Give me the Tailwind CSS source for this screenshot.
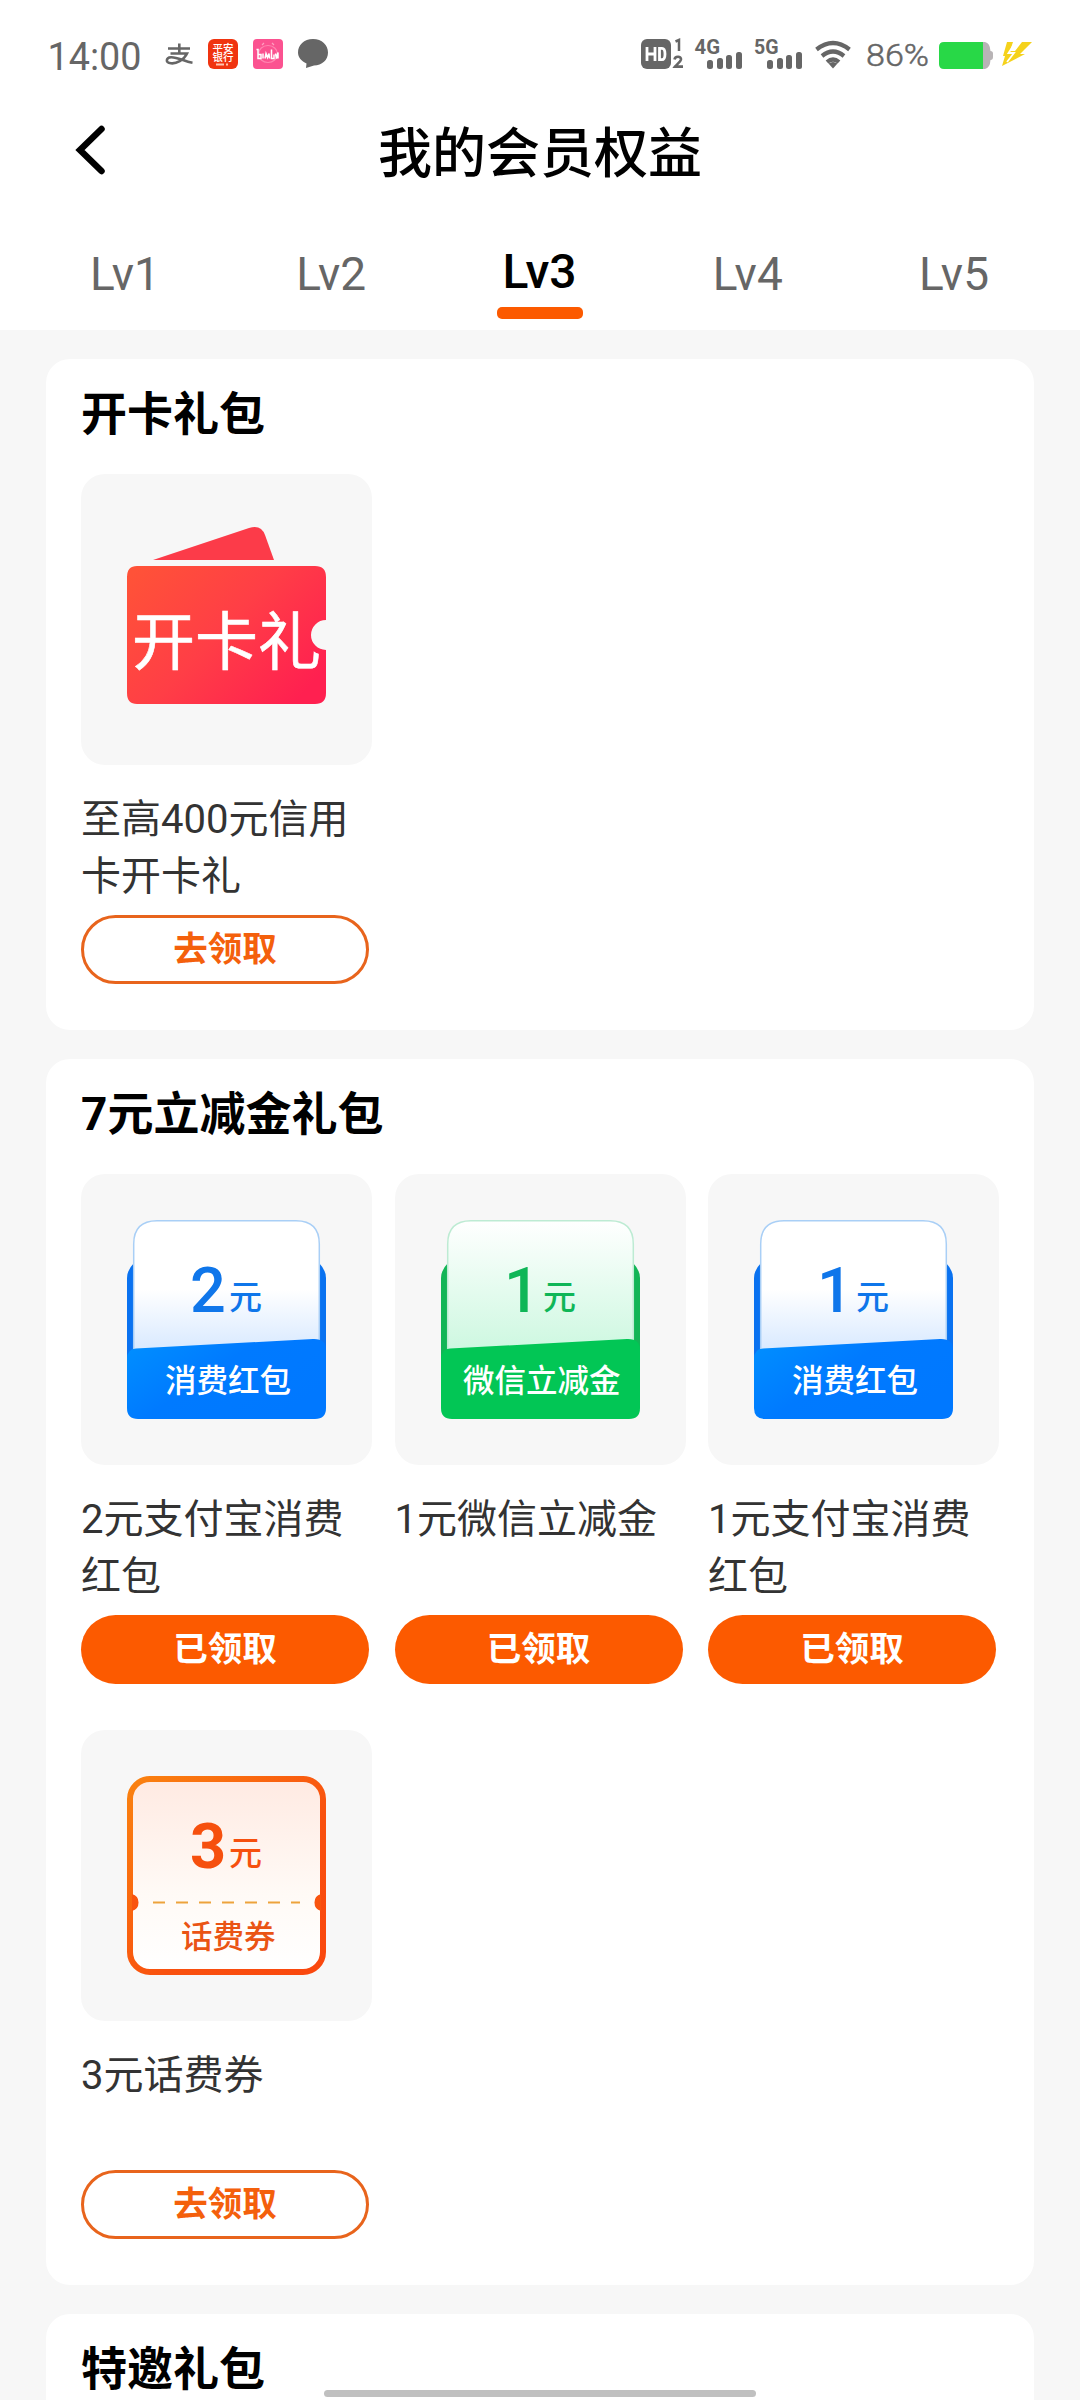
<!DOCTYPE html>
<html lang="zh-CN">
<head>
<meta charset="utf-8">
<title>我的会员权益</title>
<script src="https://cdn.jsdelivr.net/npm/@tailwindcss/browser@4"></script>
</head>
<body class="w-[1080px] h-[2400px] overflow-hidden relative bg-[#f7f7f7] font-[Roboto,'Noto_Sans_CJK_SC',sans-serif] text-black">

<svg class="absolute w-0 h-0">
  <defs>
    <linearGradient id="red" x1="0" y1="0.1" x2="1" y2="0.75"><stop offset="0" stop-color="#ff5238"/><stop offset=".5" stop-color="#ff3e46"/><stop offset="1" stop-color="#ff2050"/></linearGradient>
    <linearGradient id="bluePaper" x1="0" y1="0" x2="0" y2="1"><stop offset="0" stop-color="#fff"/><stop offset=".48" stop-color="#fff"/><stop offset="1" stop-color="#cfe4ff"/></linearGradient>
    <linearGradient id="greenPaper" x1="0" y1="0" x2="0" y2="1"><stop offset="0" stop-color="#fff"/><stop offset="1" stop-color="#c8f7dd"/></linearGradient>
    <linearGradient id="blueFront" x1="0" y1="0" x2="1" y2="0.6"><stop offset="0" stop-color="#0090ff"/><stop offset=".5" stop-color="#007aff"/><stop offset="1" stop-color="#0078ff"/></linearGradient>
    <linearGradient id="orangeEdge" x1="0" y1="0" x2="1" y2="1"><stop offset="0" stop-color="#fa8210"/><stop offset=".6" stop-color="#f9510f"/><stop offset="1" stop-color="#fa470e"/></linearGradient>
    <linearGradient id="orangePaper" x1="0" y1="0" x2="0" y2="1"><stop offset="0" stop-color="#ffeae2"/><stop offset=".6" stop-color="#fffaf6"/><stop offset="1" stop-color="#fff"/></linearGradient>
    <path id="envBack" d="M46 185V104Q46 96 53 89H238Q245 96 245 104V185Z"/>
    <path id="envPaper" d="M52.700 190V70Q52.700 46.700 76 46.700H215Q238.300 46.700 238.300 70V190Z"/>
    <path id="envFront" d="M46 185Q46 175 55 174.500L232 165Q245 164.500 245 176V234Q245 245 234 245H57Q46 245 46 234Z"/>
  </defs>
</svg>

<header class="h-[330px] bg-white">
  <div class="h-[108px] flex justify-between pl-[40px]">
    <svg class="w-[300px] h-[108px]" viewBox="40 0 300 108">
      <text x="47.500" y="69.500" font-size="38" fill="#666" textLength="94" lengthAdjust="spacingAndGlyphs">14:00</text>
      <g fill="none" stroke="#666" stroke-width="2.600"><path d="M168 48.500H190M179.300 43.500V53M170.500 53.500H187C184 60 176 64 171 63.300C165 62.500 166 57.500 171 57.200C178 57 184 61.500 192.500 62.800"/></g>
      <rect x="208" y="39" width="30" height="30" rx="6" fill="#f03410"/>
      <g fill="#fff" font-weight="500" font-size="10.500"><text x="212.500" y="51.500">平安</text><text x="212.500" y="61">银行</text></g>
      <path d="M216 64.500h8M226 64.500h2" stroke="#ffc4b0" stroke-width="2"/>
      <rect x="253" y="39" width="30" height="30" rx="4" fill="#fb5290"/>
      <ellipse cx="268" cy="54" rx="9.500" ry="8.500" fill="none" stroke="#ff85b0" stroke-width="1.200"/>
      <path d="M262 45l2-2M274 45l-2-2" stroke="#ffa0c0" stroke-width="1.200"/>
      <path d="M256.500 49.500h1.500v9h3v-4h-3M263 53.500v5M265 58.500l1-5 1.500 4 1.500-4 .5 5M271.500 49.500v9h2.500v-4M275.500 53.500l1 5 1.500-6v6" fill="none" stroke="#fff" stroke-width="1.500"/>
      <path d="M313 39C322 39 328 45 328 52.500S322 65.500 314 65.500L306 68 306.500 63.500C301.500 61 298 57.500 298 52.500 298 45 304 39 313 39Z" fill="#666"/>
    </svg>
    <svg class="w-[450px] h-[108px]" viewBox="630 0 450 108" fill="#666">
      <rect x="641" y="39" width="30" height="30" rx="6"/>
      <path d="M647 47V61M655 47V61M647 54H655M659.500 48.300H662Q665 48.300 665 54T662 59.700H659.500Z" fill="none" stroke="#fff" stroke-width="2.800"/>
      <path d="M675.500 41.500L679 40V51" fill="none" stroke="#666" stroke-width="2.500"/>
      <path d="M674.500 59.500C675 55.500 681.500 56 681 59.500 680.500 62 677 64 675 66.600H683" fill="none" stroke="#666" stroke-width="2.600"/>
      <g font-weight="700" font-size="20"><text x="694.500" y="53.500" textLength="25.500" lengthAdjust="spacingAndGlyphs">4G</text><text x="754" y="53.500" textLength="24.500" lengthAdjust="spacingAndGlyphs">5G</text></g>
      <g id="bars"><rect x="707" y="60" width="6" height="9" rx="2.500"/><rect x="717" y="58" width="6" height="11" rx="2.500"/><rect x="726" y="55" width="6" height="14" rx="2.500"/><rect x="736" y="52" width="6" height="17" rx="2.500"/></g>
      <use href="#bars" x="60"/>
      <g fill="none" stroke="#666" stroke-width="4.200"><path d="M816.500 49.500Q833 36.500 849.500 49.500"/><path d="M822 56Q833 47 844 56"/><path d="M827 62Q833 57 839 62"/></g>
      <path d="M828.500 63.500Q833 60.500 837.500 63.500L833 68.500Z"/>
      <text x="866" y="66" font-size="32" font-weight="300" stroke="#666" stroke-width=".5" textLength="63" lengthAdjust="spacingAndGlyphs">86%</text>
      <path d="M983 42H985Q990 43 990.500 51Q993 51 993 53.500V57Q993 60 990.500 60Q990 68 985 69H983Z" fill="#b8b4b6"/>
      <path d="M944 42H983V69H944Q939 69 939 64V47Q939 42 944 42Z" fill="#28d847"/>
      <path d="M1007 42H1013L1010 51H1015L1022 42H1032L1020 54H1025L1002 66L1005 56H1003Z" fill="#f5d21c"/>
      <path d="M1015 43L1008.500 53H1014L1007 62" fill="none" stroke="#fff" stroke-width="1.800"/>
    </svg>
  </div>

  <div class="h-[90px] grid grid-cols-[1fr_auto_1fr] items-center">
    <svg class="w-[40px] h-[56px] ml-[69px] mb-[6px]" viewBox="0 0 40 56" fill="none" stroke="#000" stroke-width="6.500" stroke-linecap="round"><path d="M32.500 7L11 28L32.500 49"/></svg>
    <h1 class="text-[54px] font-medium leading-[80px] pt-[3px]">我的会员权益</h1>
  </div>

  <nav class="flex justify-between pl-[90px] pr-[91px] pt-[38px] text-[46px] leading-[76px] text-[#666]">
    <span>Lv1</span>
    <span>Lv2</span>
    <span class="flex flex-col items-center text-[48px] text-black font-medium -mt-[2px]">Lv3<i class="block w-[86px] h-[12px] -mt-[3px] -mx-2 rounded-[5px] bg-[#fc5a00]"></i></span>
    <span>Lv4</span>
    <span>Lv5</span>
  </nav>
</header>

<main class="flex flex-col gap-[29px] px-[46px] pt-[29px]">
  <section class="h-[671px] rounded-[24px] bg-white pl-[35px] pt-[21px]">
    <h2 class="text-[46px] leading-[68px] font-bold mb-[26px]">开卡礼包</h2>
    <div class="grid grid-cols-[repeat(3,291px)] gap-x-[22.500px] gap-y-[45px]">
      <article>
        <svg class="block w-[291px] h-[291px] rounded-[24px] bg-[#f7f7f7]" viewBox="0 0 291 291">
          <path d="M72 86L168 54Q180 50 184 61L193 86Z" fill="#fc3b49"/>
          <path d="M56 92H234Q245 92 245 103V146A15 15 0 0 0 245 176V219Q245 230 234 230H56Q46 230 46 219V103Q46 92 56 92Z" fill="url(#red)"/>
          <text x="51" y="190" font-size="63" fill="#fff" font-weight="400" stroke="#fff" stroke-width=".6">开卡礼</text>
        </svg>
        <p class="mt-[26px] h-[114px] text-[40px] leading-[57px] text-[#333] whitespace-nowrap">至高400元信用<br>卡开卡礼</p>
        <button class="mt-[10px] w-[288px] h-[69px] flex items-center justify-center rounded-full border-[3px] border-[#e8641c] text-[34.500px] font-bold text-[#f4600c]">去领取</button>
      </article>
    </div>
  </section>

  <section class="h-[1226px] rounded-[24px] bg-white pl-[35px] pt-[21px]">
    <h2 class="text-[46px] leading-[68px] font-bold mb-[26px]">7元立减金礼包</h2>
    <div class="grid grid-cols-[repeat(3,291px)] gap-x-[22.500px] gap-y-[46px]">
      <article>
        <svg class="block w-[291px] h-[291px] rounded-[24px] bg-[#f7f7f7]" viewBox="0 0 291 291">
          <use href="#envBack" fill="#0a72f0"/>
          <use href="#envPaper" fill="url(#bluePaper)" stroke="#a9cff6" stroke-width="1.500"/>
          <use href="#envFront" fill="url(#blueFront)"/>
          <g fill="#0f76ea"><text x="109" y="138" font-size="63" font-weight="500">2</text><text x="148" y="135" font-size="33" font-weight="500">元</text></g>
          <text x="84" y="218" font-size="31.500" font-weight="500" fill="#fff">消费红包</text>
        </svg>
        <p class="mt-[26px] h-[114px] text-[40px] leading-[57px] text-[#333] whitespace-nowrap">2元支付宝消费<br>红包</p>
        <button class="mt-[10px] w-[288px] h-[69px] flex items-center justify-center rounded-full bg-[#fc5a00] text-[34.500px] font-bold text-white">已领取</button>
      </article>
      <article>
        <svg class="block w-[291px] h-[291px] rounded-[24px] bg-[#f7f7f7]" viewBox="0 0 291 291">
          <use href="#envBack" fill="#12b556"/>
          <use href="#envPaper" fill="url(#greenPaper)" stroke="#bdebd3" stroke-width="1.500"/>
          <use href="#envFront" fill="#02c655"/>
          <g fill="#0fb657"><text x="109" y="138" font-size="63" font-weight="500">1</text><text x="148" y="135" font-size="33" font-weight="500">元</text></g>
          <text x="68" y="218" font-size="31.500" font-weight="500" fill="#fff">微信立减金</text>
        </svg>
        <p class="mt-[26px] h-[114px] text-[40px] leading-[57px] text-[#333] whitespace-nowrap">1元微信立减金</p>
        <button class="mt-[10px] w-[288px] h-[69px] flex items-center justify-center rounded-full bg-[#fc5a00] text-[34.500px] font-bold text-white">已领取</button>
      </article>
      <article>
        <svg class="block w-[291px] h-[291px] rounded-[24px] bg-[#f7f7f7]" viewBox="0 0 291 291">
          <use href="#envBack" fill="#0a72f0"/>
          <use href="#envPaper" fill="url(#bluePaper)" stroke="#a9cff6" stroke-width="1.500"/>
          <use href="#envFront" fill="url(#blueFront)"/>
          <g fill="#0f76ea"><text x="109" y="138" font-size="63" font-weight="500">1</text><text x="148" y="135" font-size="33" font-weight="500">元</text></g>
          <text x="84" y="218" font-size="31.500" font-weight="500" fill="#fff">消费红包</text>
        </svg>
        <p class="mt-[26px] h-[114px] text-[40px] leading-[57px] text-[#333] whitespace-nowrap">1元支付宝消费<br>红包</p>
        <button class="mt-[10px] w-[288px] h-[69px] flex items-center justify-center rounded-full bg-[#fc5a00] text-[34.500px] font-bold text-white">已领取</button>
      </article>
      <article>
        <svg class="block w-[291px] h-[291px] rounded-[24px] bg-[#f7f7f7]" viewBox="0 0 291 291">
          <rect x="49" y="49" width="193" height="193" rx="20" fill="url(#orangePaper)" stroke="url(#orangeEdge)" stroke-width="6"/>
          <path d="M51 164A8.800 8.800 0 0 1 51 181Z M240 164A8.800 8.800 0 0 0 240 181Z" fill="#f9540f"/>
          <path d="M72 172.500H219" stroke="#eda33c" stroke-width="2" stroke-dasharray="12 11"/>
          <g fill="#f6500e"><text x="109" y="138" font-size="63" font-weight="700">3</text><text x="148" y="135" font-size="33" font-weight="500">元</text></g>
          <text x="100" y="218" font-size="31.500" font-weight="500" fill="#ea5414">话费券</text>
        </svg>
        <p class="mt-[26px] h-[114px] text-[40px] leading-[57px] text-[#333] whitespace-nowrap">3元话费券</p>
        <button class="mt-[9px] w-[288px] h-[69px] flex items-center justify-center rounded-full border-[3px] border-[#e8641c] text-[34.500px] font-bold text-[#f4600c]">去领取</button>
      </article>
    </div>
  </section>

  <section class="h-[86px] rounded-t-[24px] bg-white pl-[35px] pt-[21px]">
    <h2 class="text-[46px] leading-[68px] font-bold">特邀礼包</h2>
  </section>
</main>

<div class="absolute left-[324px] top-[2390px] w-[432px] h-[7px] rounded-full bg-[#c0c0c0]"></div>
</body>
</html>
